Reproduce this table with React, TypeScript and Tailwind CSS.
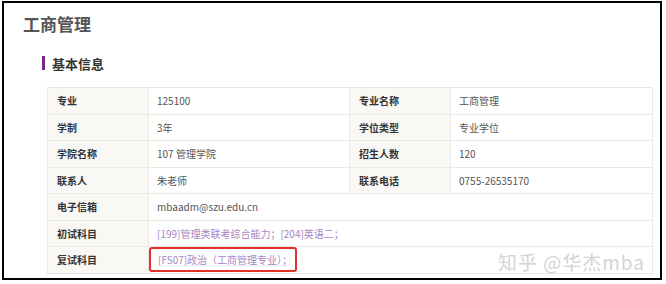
import React from "react";

const font = { fontFamily: '"Noto Sans CJK SC", "Open Sans", sans-serif' };

type Row =
  | { kind: "pair"; l1: string; v1: string; l2: string; v2: string }
  | { kind: "wide"; l: string; v: string; purple?: boolean; boxed?: boolean };

const rows: Row[] = [
  { kind: "pair", l1: "专业", v1: "125100", l2: "专业名称", v2: "工商管理" },
  { kind: "pair", l1: "学制", v1: "3年", l2: "学位类型", v2: "专业学位" },
  { kind: "pair", l1: "学院名称", v1: "107 管理学院", l2: "招生人数", v2: "120" },
  { kind: "pair", l1: "联系人", v1: "朱老师", l2: "联系电话", v2: "0755-26535170" },
  { kind: "wide", l: "电子信箱", v: "mbaadm@szu.edu.cn" },
  { kind: "wide", l: "初试科目", v: "[199]管理类联考综合能力；[204]英语二；", purple: true },
  { kind: "wide", l: "复试科目", v: "[FS07]政治（工商管理专业）；", purple: true, boxed: true },
];

function Label({ children }: { children: React.ReactNode }) {
  return (
    <div className="flex items-center h-[26.5px] pl-[9px] bg-[#faf8f4] border-b border-r border-[#ece8e2] text-[10px] font-bold text-[#333]">
      {children}
    </div>
  );
}

function Value({ children, wide, purple }: { children: React.ReactNode; wide?: boolean; purple?: boolean }) {
  return (
    <div
      className={`flex items-center h-[26.5px] pl-[8px] border-b border-r border-[#ece8e2] text-[10px] ${
        wide ? "col-span-3" : ""
      } ${purple ? "text-[#a983c4]" : "text-[#555]"}`}
    >
      {children}
    </div>
  );
}

export default function App() {
  return (
    <div className="w-[666px] h-[284px] bg-white overflow-hidden" style={font}>
      <div className="relative ml-[2px] mt-[1px] w-[660px] h-[279px] border-2 border-black bg-white">
        <div className="pl-[19px] pt-[9px] text-[17px] font-semibold text-[#555] leading-[24px]">工商管理</div>
        <div className="flex items-center gap-[7px] ml-[38px] mt-[19px] h-[16px]">
          <div className="w-[3px] h-[14px] bg-[#7a2a8c]" />
          <div className="text-[13px] font-bold text-[#333] leading-none">基本信息</div>
        </div>
        <div className="ml-[43px] mt-[16px] w-[606px] grid grid-cols-[101px_201px_101px_1fr] border-t border-l border-[#ece8e2]">
          {rows.map((r, i) =>
            r.kind === "pair" ? (
              <React.Fragment key={i}>
                <Label>{r.l1}</Label>
                <Value>{r.v1}</Value>
                <Label>{r.l2}</Label>
                <Value>{r.v2}</Value>
              </React.Fragment>
            ) : (
              <React.Fragment key={i}>
                <Label>{r.l}</Label>
                <Value wide purple={r.purple}>
                  {r.boxed ? (
                    <span className="-ml-[8px] pl-[7px] pr-[3px] h-[25px] flex items-center border-2 border-[#e2302a] rounded-[3px]">
                      {r.v}
                    </span>
                  ) : (
                    r.v
                  )}
                </Value>
              </React.Fragment>
            )
          )}
        </div>
        <div className="absolute right-[15px] bottom-[7px] text-[19px] leading-none text-[#d4d4d4] tracking-[1px]">
          知乎 @华杰mba
        </div>
      </div>
    </div>
  );
}
